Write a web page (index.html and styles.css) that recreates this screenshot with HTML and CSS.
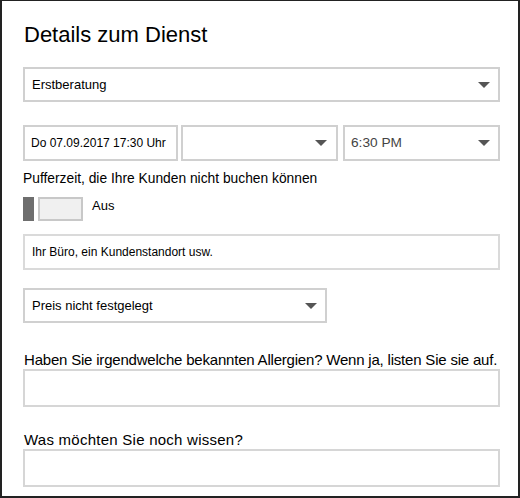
FILE: index.html
```html
<!DOCTYPE html>
<html lang="de">
<head>
<meta charset="utf-8">
<link rel="stylesheet" href="styles.css">
</head>
<body>
<div class="frame">
  <h1 class="title">Details zum Dienst</h1>

  <div class="field select full mt-title">
    <span class="val">Erstberatung</span>
    <span class="arrow"></span>
  </div>

  <div class="row mt-row">
    <div class="field date"><span class="val small">Do 07.09.2017 17:30 Uhr</span></div>
    <div class="field select mid"><span class="val"></span><span class="arrow"></span></div>
    <div class="field select time"><span class="val gray">6:30 PM</span><span class="arrow"></span></div>
  </div>

  <div class="label13 mt-buffer">Pufferzeit, die Ihre Kunden nicht buchen können</div>

  <div class="toggle-row">
    <span class="knob"></span>
    <span class="track"></span>
    <span class="toggle-text">Aus</span>
  </div>

  <div class="field text full mt-loc"><span class="val small">Ihr Büro, ein Kundenstandort usw.</span></div>

  <div class="field select price mt-price">
    <span class="val">Preis nicht festgelegt</span>
    <span class="arrow"></span>
  </div>

  <div class="question q1">Haben Sie irgendwelche bekannten Allergien? Wenn ja, listen Sie sie auf.</div>
  <div class="field area full"></div>

  <div class="question q2">Was möchten Sie noch wissen?</div>
  <div class="field area full"></div>
</div>
</body>
</html>
```
FILE: styles.css
```css
html, body {
  margin: 0;
  padding: 0;
  background: #fff;
}
body {
  font-family: "Liberation Sans", Arial, sans-serif;
  color: #000;
}
.frame {
  width: 520px;
  height: 498px;
  box-sizing: border-box;
  border-style: solid;
  border-color: #222;
  border-width: 1px 2px 2px 2px;
  padding: 21px 0 0 21px;
  display: flex;
  flex-direction: column;
  align-items: flex-start;
}
.title {
  margin: 0;
  font-size: 22px;
  line-height: 26px;
  font-weight: normal;
  padding-left: 1px;
}
.field {
  box-sizing: border-box;
  height: 35px;
  flex-shrink: 0;
  border: 2px solid #d0d0d0;
  background: #fff;
  display: flex;
  align-items: center;
  padding: 0 0 0 7px;
}
.full { width: 477px; }
.select { justify-content: space-between; padding-right: 8px; }
.val {
  font-size: 13px;
  line-height: 16px;
  white-space: nowrap;
}
.val.small { font-size: 12px; }
.val.gray { color: #444; font-size: 13.7px; }
.arrow {
  width: 0;
  height: 0;
  border-left: 6px solid transparent;
  border-right: 6px solid transparent;
  border-top: 6px solid #555;
}
.mt-title { margin-top: 19px; }
.row {
  display: flex;
  gap: 3px;
}
.mt-row { margin-top: 23px; }
.row .field { height: 36px; }
.date { width: 155px; padding-left: 6px; }
.mid { width: 157px; padding-right: 9px; }
.time { width: 157px; margin-left: 2px; padding-left: 6px; }
.label13 {
  font-size: 13.8px;
  line-height: 16px;
  white-space: nowrap;
}
.mt-buffer { margin-top: 10px; }
.toggle-row {
  display: flex;
  align-items: center;
  margin-top: 10px;
  height: 24px;
  flex-shrink: 0;
}
.knob {
  width: 11px;
  height: 24px;
  background: #6e6e6e;
}
.track {
  width: 45px;
  height: 24px;
  box-sizing: border-box;
  margin-left: 4px;
  border: 2px solid #c8c8c8;
  background: #f0f0f0;
}
.toggle-text {
  font-size: 13px;
  margin-left: 9px;
  align-self: flex-start;
  line-height: 16px;
  margin-top: 1px;
}
.text { border-color: #dadada; }
.mt-loc { margin-top: 13px; height: 36px; }
.price { width: 304px; }
.mt-price { margin-top: 18px; }
.question {
  font-size: 15px;
  line-height: 18px;
  padding-left: 1px;
  white-space: nowrap;
}
.q1 { margin-top: 28px; letter-spacing: -0.2px; }
.q2 { margin-top: 24px; letter-spacing: 0.25px; }
.area {
  height: 38px;
  margin-top: 0;
  border-color: #d6d6d6;
}
```
